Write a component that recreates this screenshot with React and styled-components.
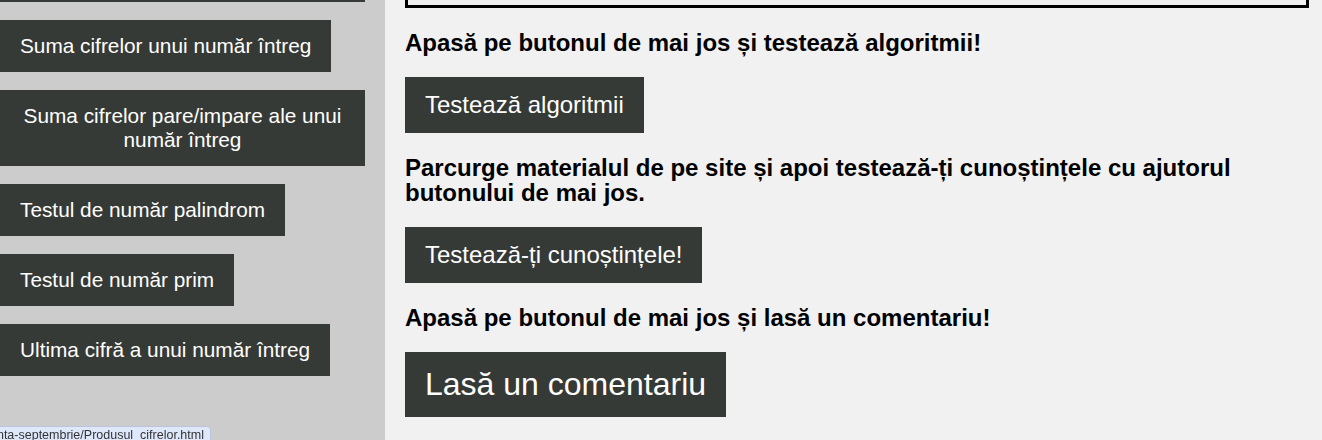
import React, { useLayoutEffect } from "react";
import styled, { createGlobalStyle } from "styled-components";

const GlobalStyle = createGlobalStyle`
  html {
    scrollbar-width: none;
  }
  html::-webkit-scrollbar {
    display: none;
  }
  body {
    margin: 0;
    font-family: "Liberation Sans", Arial, sans-serif;
    background: #f1f1f1;
  }
`;

const menu = [
  "Cifrele unui număr întreg",
  "Produsul cifrelor nenule ale unui număr întreg",
  "Suma cifrelor unui număr întreg",
  "Suma cifrelor pare/impare ale unui număr întreg",
  "Testul de număr palindrom",
  "Testul de număr prim",
  "Ultima cifră a unui număr întreg",
];

export default function App() {
  // pagina este derulată puțin în jos, ca în captură
  useLayoutEffect(() => {
    window.scrollTo(0, 164);
  }, []);

  return (
    <>
      <GlobalStyle />
      <Page>
        <Sidebar>
          {menu.map((item) => (
            <MenuLink key={item} href="#">
              {item}
            </MenuLink>
          ))}
        </Sidebar>

        <Main>
          <InfoBox>
            <p>
              Pe acest site găsești algoritmi elementari de prelucrare a
              cifrelor unui număr natural: suma și produsul cifrelor, numărul
              de cifre, cifra maximă și minimă, oglinditul unui număr și
              testele de palindrom sau de număr prim.
            </p>
            <p>
              Fiecare algoritm este explicat pas cu pas și este însoțit de un
              exemplu scris în limbajul C++, pe care îl poți rula singur.
            </p>
            <p>Alege din meniu algoritmul dorit și verifică-l pe exemple proprii.</p>
          </InfoBox>

          <Heading>Apasă pe butonul de mai jos și testează algoritmii!</Heading>
          <ActionButton href="#">Testează algoritmii</ActionButton>

          <Heading>
            Parcurge materialul de pe site și apoi testează-ți cunoștințele cu
            ajutorul butonului de mai jos.
          </Heading>
          <ActionButton href="#">Testează-ți cunoștințele!</ActionButton>

          <Heading>Apasă pe butonul de mai jos și lasă un comentariu!</Heading>
          <ActionButton href="#" $big>
            Lasă un comentariu
          </ActionButton>
        </Main>
      </Page>

      <StatusBubble>
        <span>file:///D:/Atestat/prezenta-septembrie/Produsul_cifrelor.html</span>
      </StatusBubble>
    </>
  );
}

const Page = styled.div`
  display: grid;
  grid-template-columns: 385px 1fr;
  min-height: 100vh;
`;

const Sidebar = styled.nav`
  background: #cccccc;
  padding: 20px 20px 40px 0;
  display: flex;
  flex-direction: column;
  align-items: flex-start;
  gap: 18px;
`;

const MenuLink = styled.a`
  display: block;
  background: #363a37;
  color: #ffffff;
  text-decoration: none;
  font-size: 20.8px;
  line-height: 24px;
  padding: 14px 20px;
  text-align: center;
`;

const Main = styled.main`
  background: #f1f1f1;
  padding: 20px 13px 40px 20px;
  display: flex;
  flex-direction: column;
  align-items: flex-start;
  gap: 22px;
`;

const InfoBox = styled.div`
  box-sizing: border-box;
  align-self: stretch;
  height: 152px;
  overflow: hidden;
  border: 3px solid #000000;
  padding: 12px 16px;
  font-size: 16px;
  line-height: 22px;

  p {
    margin: 0 0 8px;
  }
`;

const Heading = styled.p`
  margin: 0;
  font-size: 24px;
  font-weight: bold;
  line-height: 25px;
  color: #000000;
`;

const ActionButton = styled.a`
  display: block;
  background: #363a37;
  color: #ffffff;
  text-decoration: none;
  font-size: ${(props) => (props.$big ? "32px" : "24px")};
  padding: 14px 20px;
`;

const StatusBubble = styled.div`
  position: fixed;
  left: 0;
  bottom: 0;
  width: 204px;
  height: 13px;
  display: flex;
  justify-content: flex-end;
  overflow: hidden;
  background: #dfe8fb;
  border: 1px solid #b9c6dc;
  border-left: none;
  border-bottom: none;
  border-top-right-radius: 4px;
  padding-right: 6px;
  font-family: "Liberation Sans", Arial, sans-serif;
  font-size: 12.5px;
  line-height: 16px;
  color: #333333;
  white-space: nowrap;
`;
